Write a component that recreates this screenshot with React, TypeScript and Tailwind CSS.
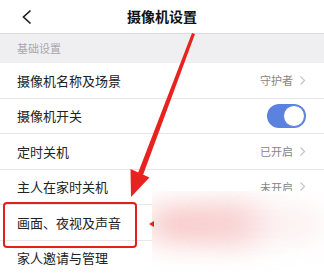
interface RowProps {
  label: string
  value?: string
  toggle?: boolean
}

function Arrow() {
  return (
    <svg width="7" height="11" viewBox="0 0 7 11" className="ml-1.5">
      <path d="M1.5 1.5 L5.5 5.5 L1.5 9.5" fill="none" stroke="#c4c4c4" strokeWidth="1.2" />
    </svg>
  )
}

function Row({ label, value, toggle }: RowProps) {
  return (
    <div className="h-[35.5px] flex items-center justify-between pl-[17px] pr-[18px] border-b border-[#e6e6e8]">
      <span className="text-[13px] text-[#222]">{label}</span>
      {toggle ? (
        <div className="w-[39px] h-[24px] rounded-full bg-[#5c82e0] flex items-center justify-end pr-[1px]">
          <div className="w-[22px] h-[22px] rounded-full bg-white border border-[#5c82e0]" />
        </div>
      ) : (
        value && (
          <span className="flex items-center text-[11px] text-[#858585]">
            {value}
            <Arrow />
          </span>
        )
      )}
    </div>
  )
}

export default function App() {
  return (
    <div
      className="relative w-[324px] h-[274px] overflow-hidden bg-white"
      style={{ fontFamily: '"Noto Sans CJK SC", "Noto Sans", sans-serif' }}
    >
      {/* Header */}
      <div className="relative h-[34px] flex items-center justify-center border-b border-[#dcdce0]">
        <svg className="absolute left-[20px] top-[9px]" width="14" height="16" viewBox="0 0 14 16">
          <path d="M10.5 1.5 L3.5 8 L10.5 14.5" fill="none" stroke="#222" strokeWidth="1.7" />
        </svg>
        <span className="text-[14px] font-bold text-[#111]">摄像机设置</span>
      </div>

      <div className="h-[29px] flex items-center pl-[17px] bg-[#efeff2] text-[11px] text-[#a8a8ac]">
        基础设置
      </div>

      <Row label="摄像机名称及场景" value="守护者" />
      <Row label="摄像机开关" toggle />
      <Row label="定时关机" value="已开启" />
      <Row label="主人在家时关机" value="未开启" />
      <Row label="画面、夜视及声音" />
      <Row label="家人邀请与管理" />

      {/* Highlight box */}
      <div className="absolute left-[3px] top-[202px] w-[134px] h-[46px] rounded-[4px] border-2 border-[#e3201d]" />

      {/* Blurred cover */}
      <div className="absolute left-[152px] top-[191px] right-0 bottom-0 bg-white overflow-hidden">
        <div className="absolute left-[-4px] top-[20px] w-[110px] h-[26px] rounded-full bg-[#f29c9c] blur-lg opacity-80" />
        <div className="absolute left-[50px] top-[22px] w-[120px] h-[22px] rounded-full bg-[#f8dcdc] blur-lg opacity-70" />
      </div>

      {/* Red arrow */}
      <svg className="absolute inset-0 pointer-events-none" width="324" height="274" viewBox="0 0 324 274">
        <polygon points="192,33 195,34 143,175 138,173" fill="#e8231f" />
        <polygon points="131,197 130.5,169 149.5,177.5" fill="#e8231f" />
        <polygon points="149,224 154,221 154,227" fill="#e8231f" />
      </svg>
    </div>
  )
}
